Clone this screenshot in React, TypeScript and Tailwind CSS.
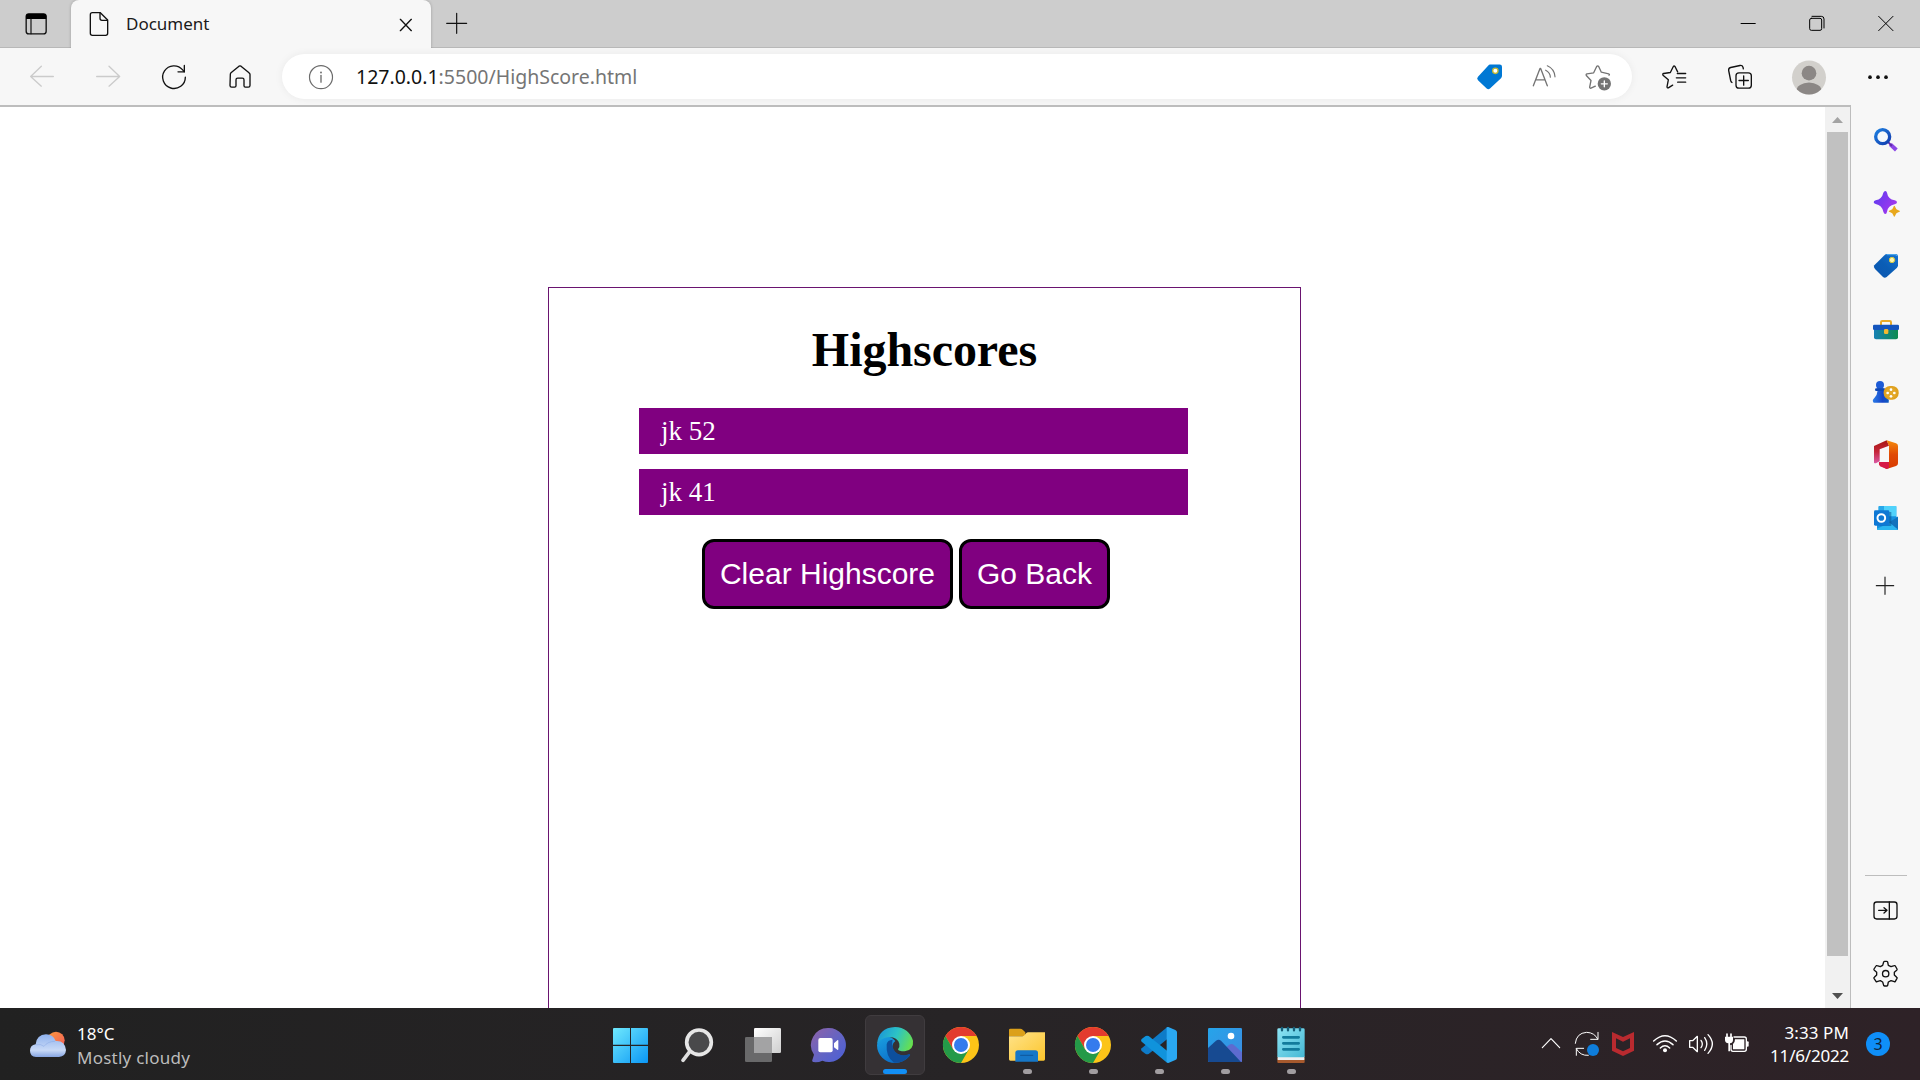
import React from "react";

type GlyphProps = {
  vb: string;
  size?: 36 | 40;
  className?: string;
  children: React.ReactNode;
};

function Glyph({ vb, size = 36, className = "", children }: GlyphProps) {
  return (
    <svg
      width={size}
      height={size}
      viewBox={vb}
      fill="none"
      stroke="none"
      strokeLinecap="round"
      strokeLinejoin="round"
      className={"shrink-0 " + className}
    >
      {children}
    </svg>
  );
}

function TabStrip() {
  return (
    <div className="flex h-12 shrink-0 bg-[#cdcdcd]">
      <div className="flex w-[71px] items-center border-b border-[#b8b8b8] pl-[18px]">
        <Glyph vb="54 18 108 108">
          <rect x="78.500" y="41.500" width="60" height="60" rx="8" stroke="#111" strokeWidth="4" />
          <path d="M78 57V49q0-8 8-8h45q8 0 8 8v8z" fill="#000" />
          <path d="M93 57V101" stroke="#111" strokeWidth="3.500" />
        </Glyph>
      </div>
      <div className="flex w-[360px] items-center rounded-t-lg bg-[#f7f7f7] pr-[7px] pl-[10px] shadow-[0_0_3px_rgba(0,0,0,0.25)] [clip-path:inset(0_-4px_0_-4px)]">
        <Glyph vb="243 18 108 108">
          <path d="M277 38h24l22 22v40q0 6-6 6h-40q-6 0-6-6V44q0-6 6-6z" stroke="#111" strokeWidth="4" />
          <path d="M300 39v16q0 6 6 6h16" stroke="#111" strokeWidth="4" />
        </Glyph>
        <span className="ml-[9px] h-12 text-[17px] leading-[48px] text-[#1b1b1b]">Document</span>
        <Glyph vb="1164 18 108 108" className="ml-auto">
          <path d="M1201 58l33 34M1234 58l-33 34" stroke="#111" strokeWidth="4" />
        </Glyph>
      </div>
      <div className="flex flex-1 items-center border-b border-[#b8b8b8] pl-2">
        <Glyph vb="1317 18 108 108">
          <path d="M1340 70h60M1370 40v60" stroke="#111" strokeWidth="3.500" />
        </Glyph>
        <div className="ml-auto flex">
          <div className="flex w-[69px] justify-center">
            <Glyph vb="868 18 108 108">
              <path d="M900 70.500h45" stroke="#000" strokeWidth="3" strokeLinecap="butt" />
            </Glyph>
          </div>
          <div className="flex w-[69px] justify-center">
            <Glyph vb="1076 18 108 108">
              <rect x="1108" y="55" width="36" height="36" rx="5" stroke="#000" strokeWidth="3" />
              <path d="M1115 49h28q8 0 8 8v27" stroke="#000" strokeWidth="3" />
            </Glyph>
          </div>
          <div className="flex w-[69px] justify-center">
            <Glyph vb="1283 18 108 108">
              <path d="M1315 49l43 43M1358 49l-43 43" stroke="#000" strokeWidth="3" />
            </Glyph>
          </div>
        </div>
      </div>
    </div>
  );
}

function Toolbar() {
  return (
    <div className="flex h-[57px] shrink-0 items-center bg-[#f7f7f7]">
      <div className="flex gap-[30px] pl-6">
        <Glyph vb="72 175.5 108 108">
          <path d="M160 228H92M124 197L92 228l32 29" stroke="#cbcbcb" strokeWidth="4" />
        </Glyph>
        <Glyph vb="270 175.5 108 108">
          <path d="M290 228h68M327 197l32 31l-32 29" stroke="#cbcbcb" strokeWidth="4" />
        </Glyph>
        <Glyph vb="468 175.5 108 108">
          <path d="M556 230a34 34 0 1 1-8-22l5 6" stroke="#111" strokeWidth="4" />
          <path d="M553 195v19h-19" stroke="#111" strokeWidth="4" />
        </Glyph>
        <Glyph vb="666 175.5 108 108">
          <path
            d="M691 222q0-3 2-5l24-20q3-2 6 0l24 20q3 2 3 5v33q0 5-5 5h-9q-4 0-4-4v-18q0-5-5-5h-14q-5 0-5 5v18q0 4-4 4h-9q-5 0-5-5z"
            stroke="#111"
            strokeWidth="4"
          />
        </Glyph>
      </div>
      <div className="ml-6 flex h-[45px] w-[1350px] items-center rounded-full bg-white pr-4 pl-[21px] shadow-[0_0_8px_rgba(0,0,0,0.06)]">
        <Glyph vb="909 175.5 108 108">
          <circle cx="963" cy="230" r="34.500" stroke="#6b6b6b" strokeWidth="3.500" />
          <path d="M963 225v20" stroke="#6b6b6b" strokeWidth="4" />
          <circle cx="963" cy="216" r="2.800" fill="#6b6b6b" />
        </Glyph>
        <span className="ml-[17px] text-[19.5px] leading-[45px] text-[#757575]">
          <span className="text-[#111]">127.0.0.1</span>:5500/HighScore.html
        </span>
        <div className="ml-auto flex gap-[18px]">
          <Glyph vb="96 175.5 108 108">
            <path d="M150 192h29q7 0 7 7v27q0 4-3 7l-33 31q-5 4-10 0l-26-25q-5-5 0-10l31-34q2-3 5-3z" fill="#0078d4" />
            <circle cx="166" cy="211" r="8" fill="#fff" stroke="#c5b92f" strokeWidth="4" />
          </Glyph>
          <Glyph vb="258 175.5 108 108">
            <path d="M280 256l20-52h2l20 52M287 238h28" stroke="#747474" strokeWidth="4" />
            <path d="M322 196q22 10 23 33M317 209q14 7 14 21" stroke="#747474" strokeWidth="3.500" />
          </Glyph>
          <Glyph vb="420 175.5 108 108">
            <path
              d="M466 257l-13 6q-4 1-4-3l4-20l-14-15q-2-4 2-5l20-3l9-19q3-4 6 0l8 17l22 5q4 1 1 4"
              stroke="#747474"
              strokeWidth="4"
            />
            <circle cx="493" cy="250" r="20" fill="#747474" />
            <path d="M484 250h18M493 241v18" stroke="#fff" strokeWidth="4" />
          </Glyph>
        </div>
      </div>
      <div className="flex items-center pl-6">
        <Glyph vb="648 175.5 108 108">
          <path
            d="M698 254l-13 8q-4 1-4-3l4-21l-16-14q-2-4 2-5l20-3l9-18q2-3 5 0l8 16"
            stroke="#111"
            strokeWidth="4"
          />
          <path d="M712 219h25M709 232h28M713 245h24" stroke="#111" strokeWidth="4" />
        </Glyph>
        <Glyph vb="846 175.5 108 108" className="ml-[30px]">
          <path d="M876 246q-3-2-4-6l-6-30q-1-7 6-9l28-6q7-1 9 5l1 5" stroke="#111" strokeWidth="4" />
          <rect x="888" y="217" width="46" height="46" rx="9" stroke="#111" strokeWidth="4" />
          <path d="M897 240h28M911 226v28" stroke="#111" strokeWidth="4" />
        </Glyph>
        <Glyph vb="1053 175.5 108 108" className="ml-[33px]">
          <clipPath id="avatar">
            <circle cx="1107" cy="231" r="51" />
          </clipPath>
          <circle cx="1107" cy="231" r="51" fill="#d2d0cc" />
          <circle cx="1107" cy="218" r="22" fill="#8b8785" />
          <ellipse cx="1107" cy="272" rx="38" ry="26" fill="#8b8785" clipPath="url(#avatar)" />
        </Glyph>
        <Glyph vb="1260 175.5 108 108" className="ml-[33px]">
          <circle cx="1290" cy="230" r="5.500" fill="#111" />
          <circle cx="1314" cy="230" r="5.500" fill="#111" />
          <circle cx="1338" cy="230" r="5.500" fill="#111" />
        </Glyph>
      </div>
    </div>
  );
}

const scores = ["jk 52", "jk 41"];

function HighscorePage() {
  return (
    <main className="flex-1 overflow-hidden bg-white pt-[180px] pl-[548px]">
      <section className="h-[900px] w-[753px] border border-[#6a1470]">
        <h1 className="pt-[34px] text-center font-['Liberation_Serif',serif] text-[48px] leading-[55px] font-bold tracking-[-0.05px] text-black">
          Highscores
        </h1>
        <ul className="mt-[31px] ml-[90px] flex w-[549px] flex-col gap-[15px]">
          {scores.map((s) => (
            <li
              key={s}
              className="h-[46px] bg-[#800080] pl-[22px] font-['Liberation_Serif',serif] text-[27px] leading-[46px] text-white"
            >
              {s}
            </li>
          ))}
        </ul>
        <div className="mt-6 ml-[153px] flex gap-[6px] font-['Liberation_Sans',sans-serif] text-[30px] text-white">
          <button className="h-[70px] w-[251px] rounded-xl border-[3px] border-black bg-[#800080] pb-[2px] whitespace-nowrap">
            Clear Highscore
          </button>
          <button className="h-[70px] w-[151px] rounded-xl border-[3px] border-black bg-[#800080] pb-[2px] whitespace-nowrap">
            Go Back
          </button>
        </div>
      </section>
    </main>
  );
}

function Scrollbar() {
  return (
    <div className="flex w-[25px] shrink-0 flex-col items-center bg-[#f1f1f1]">
      <svg width="25" height="25" viewBox="0 0 25 25" className="shrink-0">
        <path d="M7 16L12.500 10L18 16z" fill="#a3a3a3" />
      </svg>
      <div className="h-[824px] w-[21px] bg-[#c1c1c1]" />
      <svg width="25" height="25" viewBox="0 0 25 25" className="mt-auto">
        <path d="M7 10L12.500 16L18 10z" fill="#505050" />
      </svg>
    </div>
  );
}

function Sidebar() {
  return (
    <aside className="flex w-[69px] shrink-0 flex-col bg-[#f7f7f7] pt-[17px] pb-[17px] pl-[17px]">
      <svg width="0" height="0" className="absolute">
        <defs>
          <linearGradient id="lens" x1="0" y1="0" x2="1" y2="1">
            <stop offset="0" stopColor="#1d7fe0" />
            <stop offset="1" stopColor="#123cae" />
          </linearGradient>
          <linearGradient id="spark" x1="0" y1="0" x2="1" y2="0.6">
            <stop offset="0" stopColor="#5a3cf0" />
            <stop offset="1" stopColor="#a338ee" />
          </linearGradient>
          <linearGradient id="tagBlue" x1="1" y1="0" x2="0" y2="1">
            <stop offset="0" stopColor="#1672d2" />
            <stop offset="0.5" stopColor="#0a5db5" />
            <stop offset="1" stopColor="#0c56b0" />
          </linearGradient>
          <linearGradient id="box" x1="0" y1="0" x2="1" y2="0">
            <stop offset="0" stopColor="#1681b5" />
            <stop offset="1" stopColor="#0d8b4e" />
          </linearGradient>
          <linearGradient id="pawn" x1="0" y1="0" x2="1" y2="0">
            <stop offset="0" stopColor="#2b7be8" />
            <stop offset="0.6" stopColor="#1646c8" />
            <stop offset="1" stopColor="#0e5cc0" />
          </linearGradient>
          <linearGradient id="officeL" x1="0" y1="0" x2="0" y2="1">
            <stop offset="0" stopColor="#a81712" />
            <stop offset="0.5" stopColor="#c5263a" />
            <stop offset="1" stopColor="#d95aa5" />
          </linearGradient>
          <linearGradient id="officeR" x1="0" y1="0" x2="0" y2="1">
            <stop offset="0" stopColor="#f58a0b" />
            <stop offset="0.5" stopColor="#e04a06" />
            <stop offset="1" stopColor="#d83b01" />
          </linearGradient>
        </defs>
      </svg>
      <div className="flex flex-col gap-[27px]">
        <Glyph vb="204 66 108 108">
          <path d="M271 133l18 17" stroke="#8b46e6" strokeWidth="12" strokeLinecap="butt" />
          <path d="M266 128l8 8" stroke="#5d2aa8" strokeWidth="6" />
          <circle cx="248" cy="110" r="21" fill="#f4f8fc" stroke="url(#lens)" strokeWidth="10" />
        </Glyph>
        <Glyph vb="204 255 108 108">
          <path
            d="M256 273q4 0 5 5q3 19 23 23q7 2 7 6q0 4-7 6q-20 4-23 22q-1 7-5 7q-4 0-6-7q-4-19-23-23q-6-1-6-5q0-4 6-6q19-4 23-23q2-5 6-5z"
            fill="url(#spark)"
          />
          <path d="M283 317q2 0 3 5q2 7 9 9q5 1 5 3q0 2-5 3q-7 2-9 9q-1 4-3 4q-2 0-3-4q-2-7-9-9q-5-1-5-3q0-2 5-3q7-2 9-9q1-5 3-5z" fill="#e8a81c" />
        </Glyph>
        <Glyph vb="204 444 108 108">
          <path d="M260 462h27q7 0 7 7v27q0 4-3 7l-31 28q-6 4-11 0l-24-24q-6-6-2-11l31-31q3-3 6-3z" fill="url(#tagBlue)" />
          <path d="M261 464h24q5 0 6 3" stroke="#55b1f2" strokeWidth="3" />
          <circle cx="276" cy="480" r="8" fill="#fff6b0" stroke="#d5c83f" strokeWidth="3" />
        </Glyph>
        <Glyph vb="204 633 108 108">
          <path d="M243 675v-8q0-4 4-4h22q4 0 4 4v8" stroke="#e9aa28" strokeWidth="6" />
          <path d="M222 688h72v24q0 6-6 6h-60q-6 0-6-6z" fill="url(#box)" />
          <rect x="219" y="674" width="78" height="16" rx="4" fill="#1455bd" />
          <rect x="252" y="687" width="13" height="15" rx="4" fill="#f4b92f" />
        </Glyph>
        <Glyph vb="204 12 108 108">
          <path d="M231 55h19q4 17 13 29q6 6 3 14h-45q-6-7 2-14q9-9 10-23z" fill="url(#pawn)" />
          <circle cx="240" cy="45" r="12" fill="#1d5bd6" />
          <rect x="225" y="55" width="31" height="8" rx="4" fill="#0f48b5" />
          <rect x="251" y="48" width="45" height="41" rx="19" fill="#dfa11f" />
          <circle cx="273" cy="69" r="17" fill="#e3a82a" />
          <circle cx="273" cy="59" r="4" fill="#fff" />
          <circle cx="273" cy="79" r="4" fill="#fff" />
          <circle cx="263" cy="69" r="4" fill="#fff" />
          <circle cx="283" cy="69" r="4" fill="#fff" />
        </Glyph>
        <Glyph vb="204 201 108 108">
          <path d="M260 211L222 228v50q3 3 7 1l10-5v-36l28-11z" fill="url(#officeL)" />
          <path d="M260 211l28 9q6 2 6 8v52q0 6-6 8l-28 9l-23-13v-8h30V228z" fill="url(#officeR)" />
          <path d="M237 276h30v18l-7 3l-20-8q-5-7-3-13z" fill="#d61a46" />
        </Glyph>
        <Glyph vb="204 390 108 108">
          <rect x="235" y="408" width="54" height="36" rx="3" fill="#28a8ea" />
          <rect x="252" y="408" width="37" height="30" fill="#50d2fb" />
          <path d="M231 440h63v36q0 4-4 4h-55q-4 0-4-4z" fill="#1490df" />
          <path d="M294 441v36q0 3-3 2l-28-20z" fill="#1272bd" />
          <path d="M231 476l38-18l24 20q-1 2-4 2h-54q-4 0-4-4z" fill="#2ab5f0" />
          <rect x="240" y="426" width="34" height="42" fill="#0a548f" opacity="0.55" />
          <rect x="222" y="421" width="46" height="46" rx="4" fill="#0f78d4" />
          <circle cx="244" cy="444" r="11.500" stroke="#fff" strokeWidth="6" />
        </Glyph>
      </div>
      <Glyph vb="204 594 108 108" className="mt-8">
        <path d="M229 647h52M255 621v52" stroke="#222" strokeWidth="3.500" />
      </Glyph>
      <div className="mt-auto ml-[-3px] h-px w-[42px] bg-[#bdbdbd]" />
      <Glyph vb="204 126 108 108" className="mt-4">
        <rect x="222" y="156" width="69" height="51" rx="8" stroke="#111" strokeWidth="4" />
        <path d="M268 156v51M236 181h24M252 173l9 8l-9 8" stroke="#111" strokeWidth="4" />
      </Glyph>
      <Glyph vb="204 315 108 108" className="mt-[27px]">
        <path
          d="M248 346l3-10q1-2 3-2h6q2 0 3 2l2 10l8 4l10-3q2-1 3 1l5 9q1 2-1 4l-7 6v8l7 7q2 1 1 3l-5 9q-1 2-3 1l-10-3l-8 4l-2 10q-1 2-3 2h-6q-2 0-3-2l-3-10l-7-4l-10 3q-2 1-3-1l-6-9q-1-2 1-3l7-7v-8l-7-6q-2-2-1-4l6-9q1-2 3-1l10 3z"
          stroke="#111"
          strokeWidth="4"
        />
        <circle cx="257" cy="371" r="9.500" stroke="#111" strokeWidth="4" />
      </Glyph>
    </aside>
  );
}

function Chrome() {
  return (
    <Glyph vb="30 72 120 120" size={40}>
      <circle cx="93" cy="135" r="54" fill="#fcc418" />
      <path d="M46.200 108A54 54 0 0 1 139.800 108L93 108L69.600 148.500z" fill="#e33b2e" />
      <path d="M46.200 108A54 54 0 0 0 93 189L116.400 148.500L93 162L69.600 148.500z" fill="#249a48" />
      <circle cx="93" cy="135" r="27" fill="#fff" />
      <circle cx="93" cy="135" r="21" fill="#347bed" />
    </Glyph>
  );
}

function TaskCell({ running = false, children }: { running?: boolean; children: React.ReactNode }) {
  return (
    <div className="relative flex h-[72px] w-[66px] items-center justify-center">
      {children}
      {running && <span className="absolute bottom-[6px] left-[30px] h-[5px] w-[9px] rounded-full bg-[#a19da0]" />}
    </div>
  );
}

function Taskbar() {
  return (
    <footer className="flex h-[72px] shrink-0 items-center bg-linear-to-r from-[#212121] via-[#272426] to-[#2e2227]">
      <div className="flex w-[597px] items-center pl-7">
        <Glyph vb="84 72 120 120" size={40}>
          <defs>
            <linearGradient id="cloud" x1="0" y1="0" x2="0" y2="1">
              <stop offset="0" stopColor="#8fb2ee" />
              <stop offset="0.7" stopColor="#c9daf7" />
              <stop offset="1" stopColor="#86a5e2" />
            </linearGradient>
            <linearGradient id="sun" x1="0" y1="0" x2="1" y2="1">
              <stop offset="0" stopColor="#fb9a3c" />
              <stop offset="1" stopColor="#f25a5a" />
            </linearGradient>
          </defs>
          <circle cx="168" cy="121" r="26" fill="url(#sun)" />
          <path d="M108 171q-18-2-18-19q0-16 17-19q3-29 31-30q22 1 29 20q28-2 31 27q-1 19-21 21z" fill="url(#cloud)" />
          <path d="M109 134q14-3 23 5q11-15 32-15" stroke="#7fa0e0" strokeWidth="2" opacity="0.6" />
        </Glyph>
        <div className="ml-[9px] pt-[3px] text-[17px] leading-6">
          <div className="text-white">18°C</div>
          <div className="tracking-[0.25px] text-[#bcbcbc]">Mostly cloudy</div>
        </div>
      </div>
      <div className="flex">
        <TaskCell>
          <Glyph vb="60 72 120 120" size={40}>
            <defs>
              <linearGradient id="win" gradientUnits="userSpaceOnUse" x1="69" y1="84" x2="173" y2="188">
                <stop offset="0" stopColor="#6fe9fd" />
                <stop offset="1" stopColor="#0b97f5" />
              </linearGradient>
            </defs>
            <path d="M72 84H120V134H69V87q0-3 3-3zM123 84h48q3 0 3 3v47H123zM69 138h51v51H72q-3 0-3-3zM123 138h51v48q0 3-3 3H123z" fill="url(#win)" />
          </Glyph>
        </TaskCell>
        <TaskCell>
          <Glyph vb="258 72 120 120" size={40}>
            <path d="M299 155l-20 26" stroke="#dedede" strokeWidth="11" />
            <circle cx="327" cy="127" r="37" fill="#49494b" stroke="#e6e6e6" strokeWidth="11" />
          </Glyph>
        </TaskCell>
        <TaskCell>
          <Glyph vb="456 72 120 120" size={40}>
            <defs>
              <linearGradient id="pane" x1="0" y1="0" x2="1" y2="1">
                <stop offset="0" stopColor="#fff" />
                <stop offset="1" stopColor="#cfcfcf" />
              </linearGradient>
            </defs>
            <rect x="465" y="111" width="81" height="75" rx="4" fill="#69696a" />
            <rect x="492" y="84" width="81" height="75" rx="4" fill="url(#pane)" />
            <rect x="492" y="111" width="54" height="48" fill="#a3a3a4" />
          </Glyph>
        </TaskCell>
        <TaskCell>
          <Glyph vb="654 72 120 120" size={40}>
            <defs>
              <linearGradient id="chat" x1="0" y1="0" x2="1" y2="1">
                <stop offset="0" stopColor="#8f62a8" />
                <stop offset="0.55" stopColor="#6264c4" />
                <stop offset="1" stopColor="#4a5fd8" />
              </linearGradient>
            </defs>
            <path d="M715 84a51 51 0 1 1-18 98q-13 6-27 4q-5-1-3-6l5-16a51 51 0 0 1 43-80z" fill="url(#chat)" />
            <rect x="685" y="114" width="43" height="43" rx="6" fill="#fff" />
            <path d="M732 130l10-9q3-2 3 2v24q0 4-3 2l-10-7z" fill="#fff" />
          </Glyph>
        </TaskCell>
        <TaskCell>
          <div className="relative mt-[2px] ml-[2px] flex h-[60px] w-[60px] shrink-0 items-center justify-center rounded-md border border-[#403c3f] bg-[#353134]">
            <Glyph vb="855 75 120 120" size={40}>
              <defs>
                <linearGradient id="edgeTop" x1="0" y1="0.300" x2="1" y2="0.600">
                  <stop offset="0" stopColor="#1b96d8" />
                  <stop offset="0.500" stopColor="#2cc3c5" />
                  <stop offset="1" stopColor="#68e04e" />
                </linearGradient>
                <linearGradient id="edgeLeft" x1="0" y1="0" x2="0.600" y2="1">
                  <stop offset="0" stopColor="#1aa0e0" />
                  <stop offset="1" stopColor="#0b6cc8" />
                </linearGradient>
              </defs>
              <path d="M861 135a54 54 0 0 0 54 54q26 0 43-20q4-6-2-5q-12 5-24 2q-22-5-25-27q0-10 9-16q-12-16-31-12q-20 4-24 24z" fill="url(#edgeLeft)" />
              <path d="M890 133q2-13 18-14q-2 8-1 17q4 24 26 29q12 2 24-3q5-1 3 4q-18 24-48 22q-25-16-22-55z" fill="#0d4f9c" />
              <path d="M861 133q4-50 54-52q42 2 54 41q3 28-25 32q-19 0-20-6q6-7 4-17q-6-20-30-20q-27 2-37 22z" fill="url(#edgeTop)" />
            </Glyph>
            <span className="absolute bottom-0 left-[17px] h-[5px] w-6 rounded-full bg-[#128ff5]" />
          </div>
        </TaskCell>
        <TaskCell>
          <Chrome />
        </TaskCell>
        <TaskCell running>
          <Glyph vb="228 72 120 120" size={40}>
            <defs>
              <linearGradient id="folder" x1="0" y1="0" x2="1" y2="1">
                <stop offset="0" stopColor="#ffe38a" />
                <stop offset="1" stopColor="#fcc52c" />
              </linearGradient>
            </defs>
            <path d="M241 86h30q4 0 7 3l8 8v12h-49V90q0-4 4-4z" fill="#dba01a" />
            <path d="M237 109h40q4 0 7-4l5-6q2-2 5-2h51v81q0 4-4 4H241q-4 0-4-4z" fill="url(#folder)" />
            <path d="M256 185v-26q0-8 8-8h52q8 0 8 8v26z" fill="#1677c8" />
            <path d="M272 166h36" stroke="#105ca2" strokeWidth="4" />
          </Glyph>
        </TaskCell>
        <TaskCell running>
          <Chrome />
        </TaskCell>
        <TaskCell running>
          <Glyph vb="624 72 120 120" size={40}>
            <path d="M712 81v36l-56 45q-5 2-9 0l-12-9q-4-4 0-8z" fill="#0e7bc8" />
            <path d="M712 189v-36L656 108q-5-2-9 0l-12 9q-4 4 0 8z" fill="#1093dc" />
            <path d="M710 82q2-2 5-1l21 9q5 2 5 7v76q0 5-5 7l-21 9q-5 0-5-4z" fill="#2aa8f2" />
          </Glyph>
        </TaskCell>
        <TaskCell running>
          <Glyph vb="822 72 120 120" size={40}>
            <defs>
              <linearGradient id="sky" x1="0" y1="0" x2="1" y2="1">
                <stop offset="0" stopColor="#25a4ea" />
                <stop offset="1" stopColor="#3e8be0" />
              </linearGradient>
              <clipPath id="photoClip">
                <rect x="834" y="84" width="102" height="102" rx="4" />
              </clipPath>
            </defs>
            <g clipPath="url(#photoClip)">
              <rect x="834" y="84" width="102" height="102" fill="url(#sky)" />
              <path d="M885 145l13-11q7-4 13 0l26 24v30h-20z" fill="#5d6bd0" />
              <path d="M834 144l24-22q8-5 15 0l60 64h-99z" fill="#174a91" />
              <circle cx="903" cy="108" r="10" fill="#fff" />
            </g>
          </Glyph>
        </TaskCell>
        <TaskCell running>
          <Glyph vb="1020 72 120 120" size={40}>
            <defs>
              <linearGradient id="pad" x1="0" y1="0" x2="1" y2="1">
                <stop offset="0" stopColor="#8ce4f4" />
                <stop offset="1" stopColor="#46b8d4" />
              </linearGradient>
            </defs>
            <rect x="1042" y="172" width="82" height="17" rx="3" fill="#a6592d" />
            <rect x="1043" y="168" width="80" height="12" fill="#eceff0" />
            <rect x="1042" y="85" width="82" height="87" rx="4" fill="url(#pad)" />
            <path d="M1056 84v7M1074 84v7M1092 84v7M1110 84v7" stroke="#155e78" strokeWidth="7" />
            <path d="M1060 112h46M1060 130h46M1060 148h46" stroke="#127b9c" strokeWidth="8" />
          </Glyph>
        </TaskCell>
      </div>
      <div className="ml-auto flex items-center pr-[30px]">
        <Glyph vb="39 78 108 108">
          <path d="M67 143l26-27l26 27" stroke="#fff" strokeWidth="3.500" />
        </Glyph>
        <Glyph vb="147 78 108 108">
          <path d="M166 130q3-31 34-33q24 1 33 20M234 97v21h-22M169 166v-21h22M169 146q11 22 36 20" stroke="#fff" strokeWidth="3" />
          <circle cx="219" cy="150" r="18" fill="#0e7ddb" />
        </Glyph>
        <Glyph vb="255 78 108 108">
          <path d="M276 96l33 15l33-15v56l-33 16l-33-16z" fill="#b92a2f" strokeLinejoin="miter" />
          <path d="M288 115l21 10l21-10v29l-21 10l-21-10z" fill="#2c2327" />
        </Glyph>
        <Glyph vb="381 78 108 108" className="ml-[6px]">
          <path d="M401 123q34-32 68 0M411 134q24-22 48 0M421 144q14-13 28 0" stroke="#fff" strokeWidth="4.500" />
          <circle cx="435" cy="151" r="6" fill="#fff" />
        </Glyph>
        <Glyph vb="489 78 108 108">
          <path d="M509 122h9l14-13v46l-14-13h-9z" stroke="#fff" strokeWidth="4" />
          <path d="M543 121q8 11 0 22M554 113q13 19 0 38M564 104q26 28 0 56" stroke="#fff" strokeWidth="4" />
        </Glyph>
        <Glyph vb="597 78 108 108">
          <path d="M642 111h31q6 0 6 6v31q0 6-6 6h-34q-6 0-6-6v-12" stroke="#fff" strokeWidth="4" />
          <path d="M645 118h28v30h-34v-16q6-4 6-14z" fill="#fff" />
          <path d="M683 127v10" stroke="#fff" strokeWidth="6" />
          <path d="M615 110h24v10q0 9-9 10v24h-5v-24q-10-1-10-10z" fill="#fff" />
          <path d="M621 102v8M633 102v8" stroke="#fff" strokeWidth="5" />
        </Glyph>
        <div className="w-[95px] pr-px text-right text-[17px] leading-[23px] text-white">
          <div className="tracking-[0.1px]">3:33 PM</div>
          <div className="tracking-[-0.2px]">11/6/2022</div>
        </div>
        <div className="ml-4 flex h-6 w-6 items-center justify-center rounded-full bg-[#0f8ff8] text-base leading-6 text-[#10233a]">
          3
        </div>
      </div>
    </footer>
  );
}

export default function App() {
  return (
    <div className="flex h-[1080px] w-[1920px] flex-col overflow-hidden bg-[#f7f7f7] font-['Noto_Sans',sans-serif]">
      <TabStrip />
      <Toolbar />
      <div className="flex min-h-0 flex-1">
        <div className="flex flex-1 overflow-hidden border-t-2 border-r border-[#bdbdbd]">
          <HighscorePage />
          <Scrollbar />
        </div>
        <Sidebar />
      </div>
      <Taskbar />
    </div>
  );
}
